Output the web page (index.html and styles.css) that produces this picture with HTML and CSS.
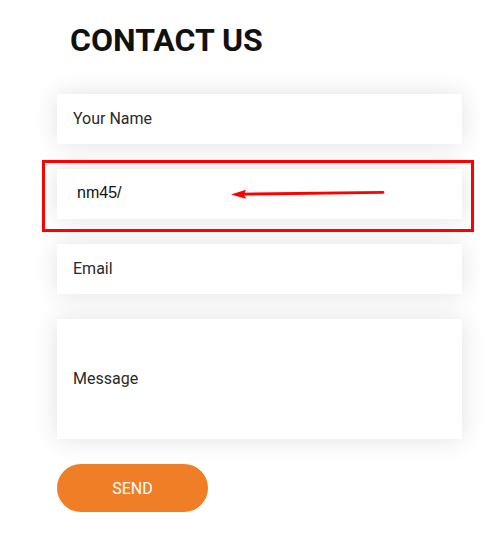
FILE: index.html
```html
<!DOCTYPE html>
<html>
<head>
<meta charset="utf-8">
<link rel="stylesheet" href="styles.css">
</head>
<body>
<div class="page">
  <h1 class="title">CONTACT US</h1>
  <form class="form">
    <div class="field"><span class="placeholder">Your Name</span></div>
    <div class="field field-typed"><span class="typed">nm45/</span></div>
    <div class="field"><span class="placeholder">Email</span></div>
    <div class="field field-message"><span class="placeholder">Message</span></div>
    <div class="actions"><span class="send">SEND</span></div>
  </form>
  <div class="highlight"></div>
  <svg class="arrow" width="488" height="542" viewBox="0 0 488 542">
    <line x1="383" y1="192.3" x2="240" y2="194.2" stroke="#ff0000" stroke-width="2.8" stroke-linecap="round"/>
    <polygon points="231,194.4 246,189.8 244,194.2 246,198.8" fill="#ff0000"/>
  </svg>
</div>
</body>
</html>
```
FILE: styles.css
```css
html, body {
  margin: 0;
  padding: 0;
  background: #ffffff;
}
.page {
  position: relative;
  width: 488px;
  height: 542px;
  padding: 20px 26px 0 57px;
  box-sizing: border-box;
  font-family: Roboto, "Liberation Sans", sans-serif;
}
.title {
  margin: 0 0 34px 13px;
  font-size: 32px;
  line-height: 40px;
  font-weight: 700;
  color: #111111;
}
.form {
  display: flex;
  flex-direction: column;
  gap: 25px;
  margin: 0;
}
.field {
  height: 50px;
  background: #ffffff;
  box-shadow: 0 0 24px rgba(0, 0, 0, 0.12);
  display: flex;
  align-items: center;
  padding: 0 0 2px 16px;
  box-sizing: border-box;
}
.field-message {
  height: 120px;
}
.placeholder {
  font-size: 16px;
  color: #2a2a2a;
}
.typed {
  font-family: "Liberation Sans", Arial, sans-serif;
  font-size: 16px;
  color: #111111;
  padding-left: 4px;
}
.actions {
  display: flex;
}
.send {
  width: 151px;
  height: 48px;
  border-radius: 24px;
  background: #f07e27;
  color: #ffffff;
  font-size: 16px;
  display: flex;
  align-items: center;
  justify-content: center;
}
.highlight {
  position: absolute;
  left: 42px;
  top: 160px;
  width: 432px;
  height: 72px;
  border: 3px solid #ff0000;
  box-sizing: border-box;
}
.arrow {
  position: absolute;
  left: 0;
  top: 0;
  pointer-events: none;
}
```
